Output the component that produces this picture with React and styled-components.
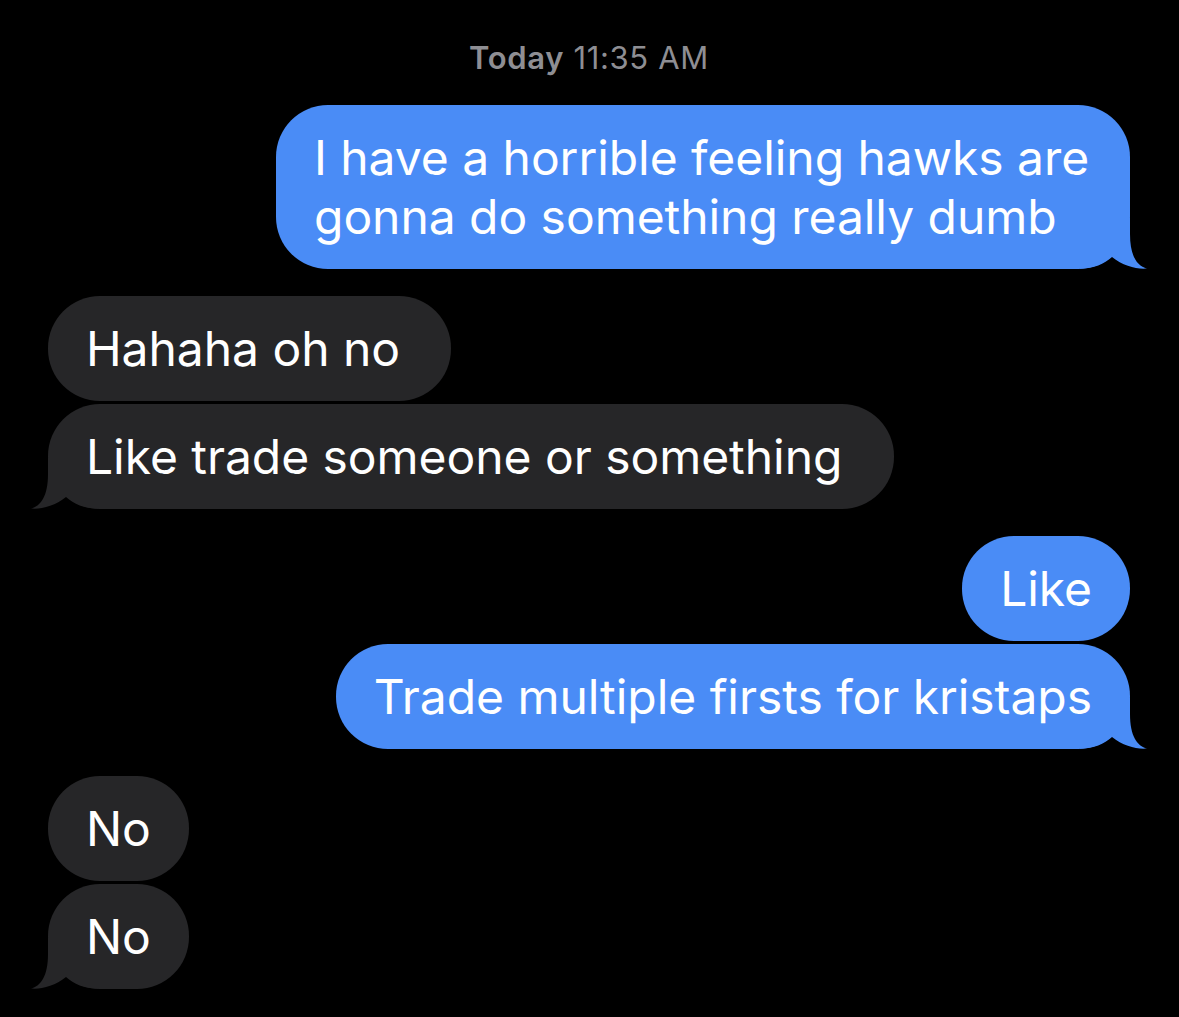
import React from 'react';
import styled, { createGlobalStyle } from 'styled-components';

const GlobalStyle = createGlobalStyle`
  html, body {
    margin: 0;
    padding: 0;
    background: #000;
  }
  body {
    font-family: 'Inter', 'Noto Sans', sans-serif;
    -webkit-font-smoothing: antialiased;
  }
`;

const BLUE = '#4a8cf6';
const GRAY = '#262628';

const Thread = styled.div`
  width: 1179px;
  height: 1017px;
  box-sizing: border-box;
  padding: 40px 49px 0 48px;
  display: flex;
  flex-direction: column;
  background: #000;
  overflow: hidden;
`;

const Stamp = styled.div`
  text-align: center;
  font-size: 31px;
  line-height: 36px;
  letter-spacing: 0.65px;
  color: #8e8e93;
  margin-bottom: 29px;

  b {
    font-weight: 600;
  }
`;

const Group = styled.div`
  display: flex;
  flex-direction: column;
  align-items: ${p => (p.$sent ? 'flex-end' : 'flex-start')};
  gap: 3px;
  margin-bottom: 27px;
`;

const Bubble = styled.div`
  position: relative;
  z-index: 0;
  box-sizing: border-box;
  max-width: 854px;
  padding: 23px 38px;
  border-radius: 52px;
  background: ${p => (p.$sent ? BLUE : GRAY)};
  color: #fff;
  font-size: 48px;
  line-height: 59px;
  letter-spacing: -0.05px;
  white-space: pre-wrap;
`;

const Tail = styled.svg`
  position: absolute;
  z-index: -1;
  bottom: 0;
  width: 68px;
  height: 51px;
  ${p =>
    p.$sent
      ? 'right: -18px;'
      : 'left: -18px; transform: scaleX(-1);'}
`;

const BubbleTail = ({ sent }) => (
  <Tail $sent={sent} viewBox="0 0 68 51">
    <path
      d="M0 0 H50 V16 C50 38 57 48 67 50.5 C57 51.5 43 48 32 39 C24 46 14 50.5 0 50.5 Z"
      fill={sent ? BLUE : GRAY}
    />
  </Tail>
);

const groups = [
  { sent: true, lines: ['I have a horrible feeling hawks are gonna do something really dumb'] },
  { sent: false, lines: ['Hahaha oh no\u00a0', 'Like trade someone or something\u00a0'] },
  { sent: true, lines: ['Like', 'Trade multiple firsts for kristaps'] },
  { sent: false, lines: ['No', 'No'] },
];

export default function App() {
  return (
    <>
      <GlobalStyle />
      <Thread>
        <Stamp>
          <b>Today</b> 11:35 AM
        </Stamp>
        {groups.map((g, i) => (
          <Group key={i} $sent={g.sent}>
            {g.lines.map((text, j) => (
              <Bubble key={j} $sent={g.sent}>
                {text}
                {j === g.lines.length - 1 && <BubbleTail sent={g.sent} />}
              </Bubble>
            ))}
          </Group>
        ))}
      </Thread>
    </>
  );
}
